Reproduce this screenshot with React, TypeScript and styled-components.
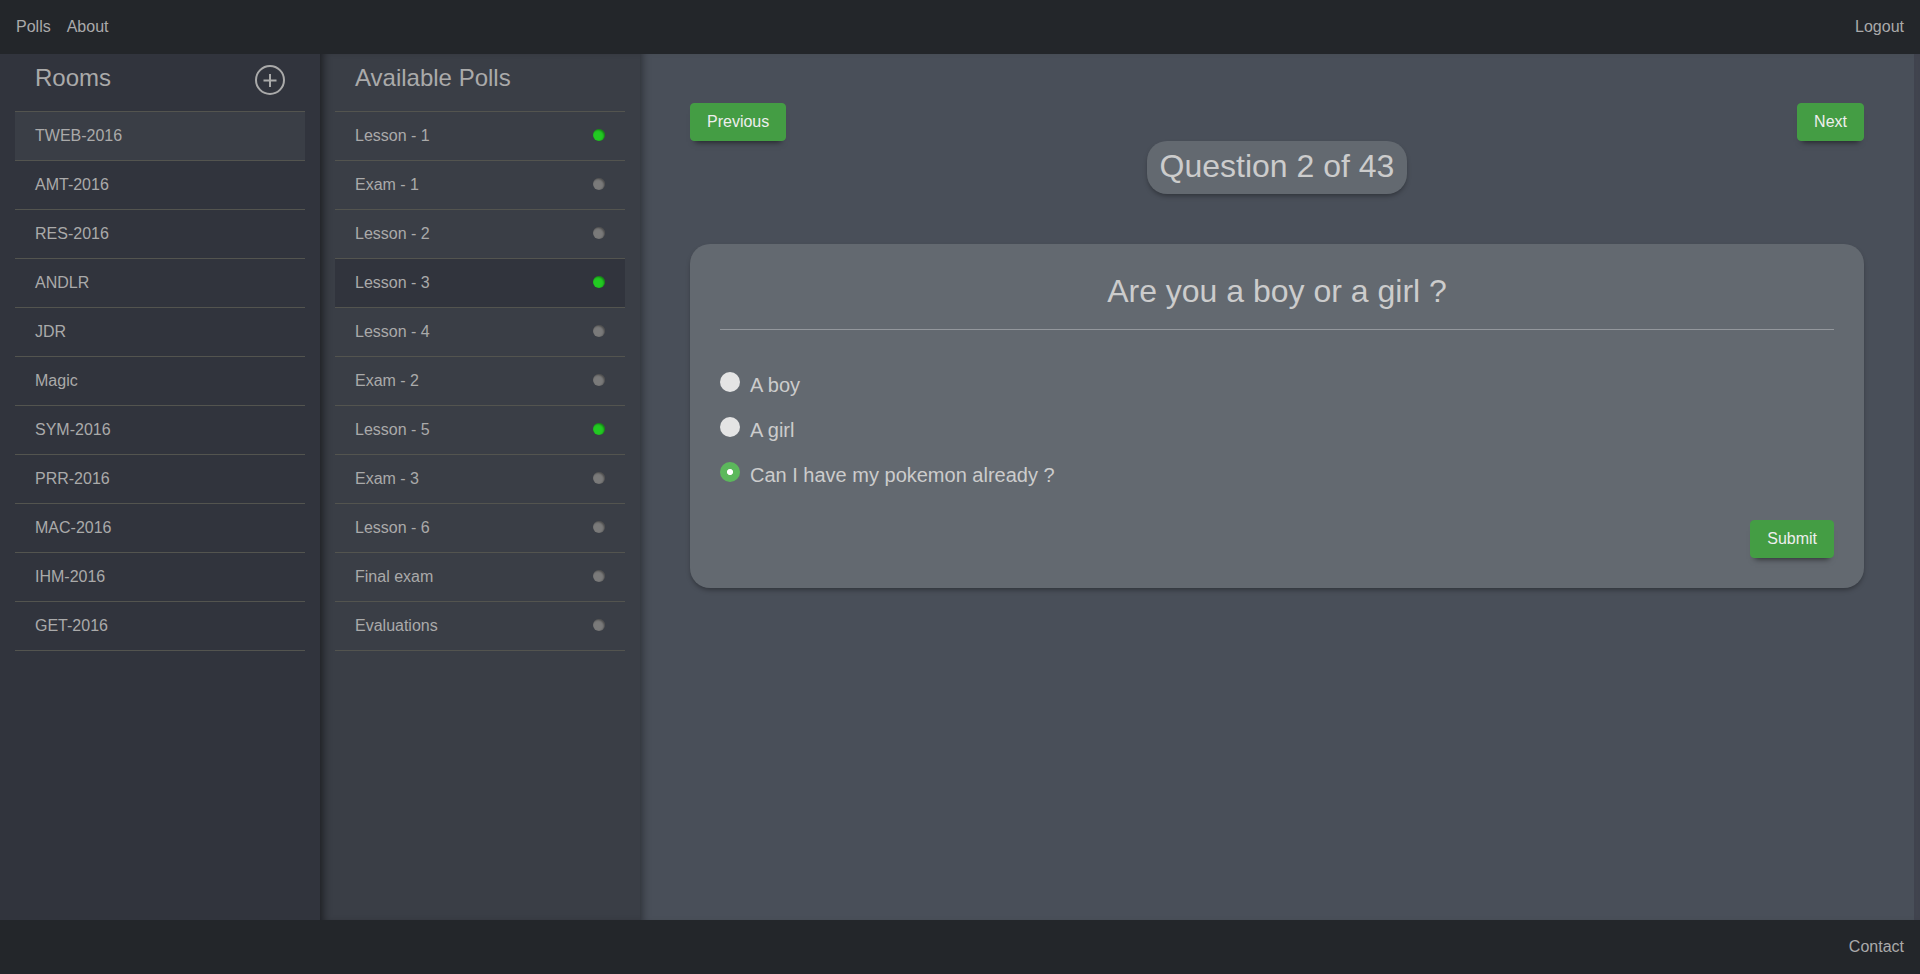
import React, { useState } from 'react';
import styled, { createGlobalStyle, css } from 'styled-components';

const GlobalStyle = createGlobalStyle`
  *, *::before, *::after { box-sizing: border-box; }
  body {
    margin: 0;
    overflow: hidden;
    font-family: "Liberation Sans", Arial, sans-serif;
    font-size: 16px;
    line-height: 24px;
    color: #aaaaaa;
    background: #494f59;
  }
  h2, h4, ul { margin: 0; padding: 0; font-weight: 400; }
`;

const Page = styled.div`
  display: flex;
  flex-direction: column;
  height: 100vh;
`;

const Bar = styled.nav<{ $end?: boolean }>`
  display: flex;
  flex: none;
  justify-content: ${(p) => (p.$end ? 'flex-end' : 'space-between')};
  height: 54px;
  padding: 15px 16px 0;
  background: #23262a;
`;

const LinkGroup = styled.div`
  display: flex;
  gap: 16px;
`;

const NavLink = styled.a`
  color: #aaaaaa;
  cursor: pointer;
`;

const Body = styled.div`
  display: flex;
  flex: 1;
  min-height: 0;
`;

const Column = styled.section<{ $tone: 'dark' | 'light' }>`
  flex: none;
  width: 320px;
  padding: 0 15px;
  ${(p) =>
    p.$tone === 'dark'
      ? css`
          background: #31343d;
        `
      : css`
          background: #3a3e46;
          box-shadow: inset 8px 0 8px -5px rgba(0, 0, 0, 0.5);
        `}
`;

const ColumnHeader = styled.header`
  display: flex;
  justify-content: space-between;
  height: 57px;
  padding: 11px 20px 0;
`;

const ColumnTitle = styled.h4`
  font-size: 24px;
  line-height: 26.4px;
`;

const AddButton = styled.button`
  display: flex;
  align-items: center;
  justify-content: center;
  width: 30px;
  height: 30px;
  padding: 0;
  color: #aaaaaa;
  background: none;
  border: 2px solid #aaaaaa;
  border-radius: 50%;
`;

const List = styled.ul`
  list-style: none;
  border-top: 1px solid #53544f;
`;

const Item = styled.li<{ $selected?: string }>`
  display: flex;
  align-items: center;
  justify-content: space-between;
  height: 49px;
  padding: 0 20px 1px;
  border-bottom: 1px solid #53544f;
  background: ${(p) => p.$selected ?? 'transparent'};
  cursor: pointer;
`;

const Status = styled.span<{ $open: boolean }>`
  width: 12px;
  height: 12px;
  margin-bottom: 1px;
  border-radius: 50%;
  background: ${(p) => (p.$open ? '#22c922' : '#7a7a7a')};
  box-shadow: inset -1px 1px 2px rgba(0, 0, 0, 0.4);
`;

const Main = styled.main`
  flex: 1;
  padding: 49px 50px 0;
  box-shadow: inset 8px 0 8px -6px rgba(0, 0, 0, 0.4);
`;

const ScrollTrack = styled.div`
  flex: none;
  width: 6px;
  background: #434651;
  box-shadow: inset 0 0 6px rgba(0, 0, 0, 0.08);
`;

const Actions = styled.div<{ $end?: boolean }>`
  display: flex;
  justify-content: ${(p) => (p.$end ? 'flex-end' : 'space-between')};
`;

const Button = styled.button`
  height: 38px;
  padding: 0 16px;
  font: inherit;
  line-height: 20px;
  color: #eeeeee;
  background: #449d44;
  border: 1px solid #449d44;
  border-radius: 4px;
  box-shadow: 0 6px 6px -5px rgba(0, 0, 0, 0.6);
`;

const Counter = styled.h2`
  width: 260px;
  height: 53px;
  margin: 0 auto 50px;
  padding-top: 8px;
  font-size: 32px;
  line-height: 35.2px;
  text-align: center;
  color: #cccccc;
  background: #636970;
  border-radius: 20px;
  box-shadow: 0 3px 5px -1px rgba(0, 0, 0, 0.35);
`;

const Card = styled.article`
  padding: 30px;
  color: #cccccc;
  background: #636970;
  border-radius: 20px;
  box-shadow: 0 3px 5px -1px rgba(0, 0, 0, 0.35);
`;

const Question = styled.h2`
  height: 56px;
  font-size: 32px;
  line-height: 35px;
  text-align: center;
  border-bottom: 1px solid #93979c;
`;

const Answers = styled.div`
  display: flex;
  flex-direction: column;
  gap: 15px;
  padding: 42px 0 28px;
`;

const Answer = styled.label`
  display: flex;
  gap: 10px;
  height: 30px;
  font-size: 20px;
  line-height: 26px;
  cursor: pointer;
`;

const Radio = styled.input`
  appearance: none;
  width: 20px;
  height: 20px;
  margin: 0;
  border-radius: 50%;
  background: #e4e4e4;
  &:checked {
    background: radial-gradient(circle, #ffffff 2.7px, #5cb85c 3.4px);
  }
`;

const rooms = [
  'TWEB-2016', 'AMT-2016', 'RES-2016', 'ANDLR', 'JDR', 'Magic',
  'SYM-2016', 'PRR-2016', 'MAC-2016', 'IHM-2016', 'GET-2016',
];

const polls = [
  { name: 'Lesson - 1', open: true },
  { name: 'Exam - 1', open: false },
  { name: 'Lesson - 2', open: false },
  { name: 'Lesson - 3', open: true },
  { name: 'Lesson - 4', open: false },
  { name: 'Exam - 2', open: false },
  { name: 'Lesson - 5', open: true },
  { name: 'Exam - 3', open: false },
  { name: 'Lesson - 6', open: false },
  { name: 'Final exam', open: false },
  { name: 'Evaluations', open: false },
];

const answers = ['A boy', 'A girl', 'Can I have my pokemon already ?'];

export default function App() {
  const [room, setRoom] = useState('TWEB-2016');
  const [poll, setPoll] = useState('Lesson - 3');
  const [answer, setAnswer] = useState(2);

  return (
    <Page>
      <GlobalStyle />
      <Bar>
        <LinkGroup>
          <NavLink>Polls</NavLink>
          <NavLink>About</NavLink>
        </LinkGroup>
        <NavLink>Logout</NavLink>
      </Bar>
      <Body>
        <Column $tone="dark">
          <ColumnHeader>
            <ColumnTitle>Rooms</ColumnTitle>
            <AddButton aria-label="Add room">
              <svg width="14" height="14" viewBox="0 0 14 14" stroke="currentColor" strokeWidth="2">
                <path d="M0.5 7.5H13.5M7 1V14" />
              </svg>
            </AddButton>
          </ColumnHeader>
          <List>
            {rooms.map((name) => (
              <Item key={name} $selected={name === room ? '#3a3e46' : undefined} onClick={() => setRoom(name)}>
                {name}
              </Item>
            ))}
          </List>
        </Column>
        <Column $tone="light">
          <ColumnHeader>
            <ColumnTitle>Available Polls</ColumnTitle>
          </ColumnHeader>
          <List>
            {polls.map(({ name, open }) => (
              <Item key={name} $selected={name === poll ? '#31343d' : undefined} onClick={() => setPoll(name)}>
                {name}
                <Status $open={open} />
              </Item>
            ))}
          </List>
        </Column>
        <Main>
          <Actions>
            <Button>Previous</Button>
            <Button>Next</Button>
          </Actions>
          <Counter>Question 2 of 43</Counter>
          <Card>
            <Question>Are you a boy or a girl ?</Question>
            <Answers>
              {answers.map((text, i) => (
                <Answer key={text}>
                  <Radio type="radio" name="answer" checked={answer === i} onChange={() => setAnswer(i)} />
                  <span>{text}</span>
                </Answer>
              ))}
            </Answers>
            <Actions $end>
              <Button>Submit</Button>
            </Actions>
          </Card>
        </Main>
        <ScrollTrack />
      </Body>
      <Bar $end>
        <NavLink>Contact</NavLink>
      </Bar>
    </Page>
  );
}
